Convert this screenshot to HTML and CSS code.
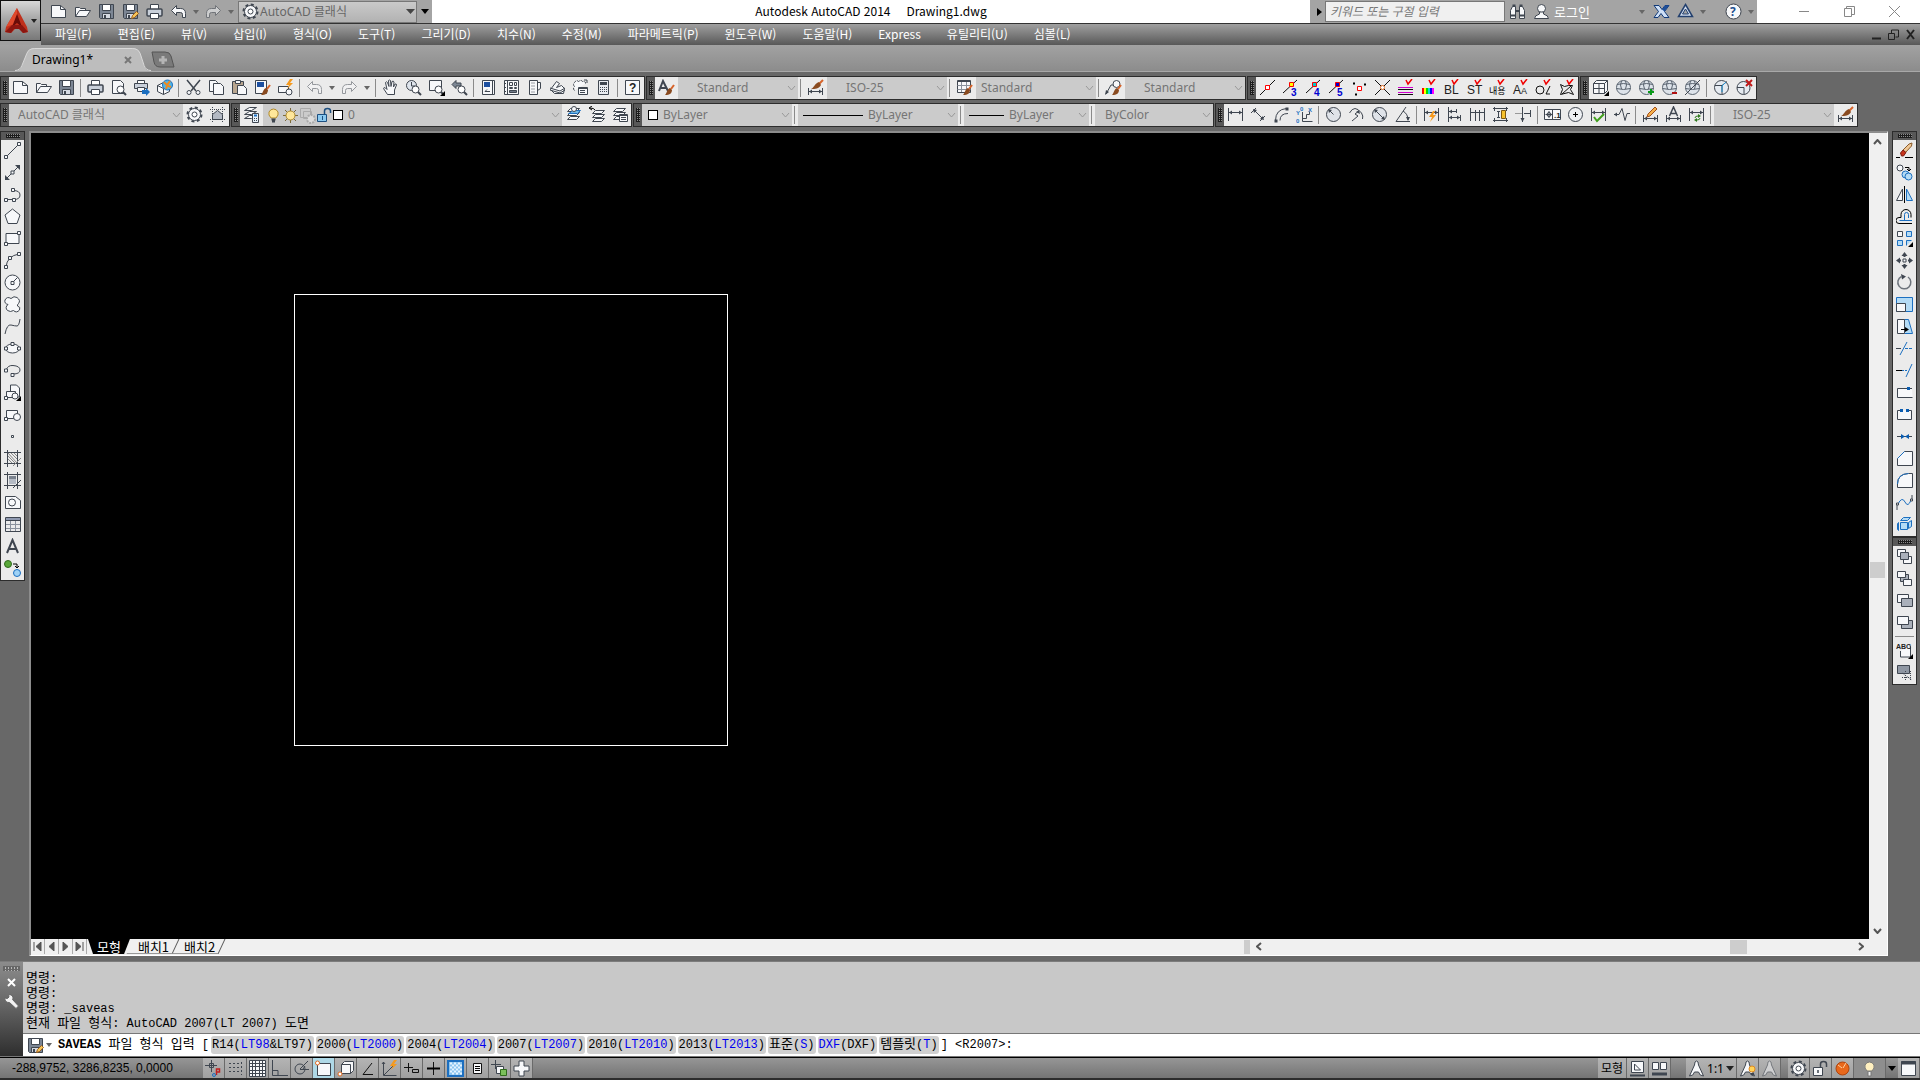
FILE: index.html
```
<!DOCTYPE html>
<html lang="ko">
<head>
    <meta charset="UTF-8">
    <meta name="viewport" content="width=device-width, initial-scale=1.0">
    <title>Autodesk AutoCAD 2014 - Drawing1.dwg</title>
    <link rel="stylesheet" href="styles.css">
</head>
<body>
    <!-- icon sprite -->
    <svg class="sprite" aria-hidden="true">
        <defs>
            <g id="p-mag"><circle cx="10.500" cy="10.500" r="3.500" fill="#fff"/><path d="M13 13l3 3" stroke-width="2"/></g>
            <g id="p-brush"><path d="M16 6l-3 4" stroke="#d8642a" stroke-width="2"/><path d="M12 9l2 2c0 3-2 5-7 5 2-2 2-6 5-7z" fill="#8a4b20" stroke="none"/></g>
            <g id="p-pencil"><path d="M9.500 15.500l1-3 4-4 2 2-4 4z" fill="#f6c65a" stroke="#a0601c"/></g>
            <g id="p-check"><path d="M9 1l2 4 4-5" stroke="#f00000" stroke-width="1.500"/></g>
            <g id="p-corner"><path d="M17 12v5h-5z" fill="#000" stroke="none"/></g>
            <g id="p-dim"><path d="M1.500 2v13M15.500 2v13M2 6.500h13"/><path d="M2 6.500l3-2v4zM15 6.500l-3-2v4z" fill="#3f4650" stroke="none"/></g>
            <g id="p-dimlow"><path d="M1.500 9v7M15.500 9v7M2 12.500h13"/><path d="M2 12.500l3-2v4zM15 12.500l-3-2v4z" fill="#3f4650" stroke="none"/></g>
            <g id="p-sphere"><circle cx="8.500" cy="8.500" r="7" fill="#dde3ea" stroke="#5a6470"/><path d="M2 5.500q6.500-2 13 0M1.500 9.500q7 2 14 0M6.500 2q-2 4 0 8M10.500 2q2 4 0 8" stroke="#5a6470"/></g>
            <g id="p-layers"><path d="M5.500 2.500h9l-3 3h-9zM5.500 6.500h9l-3 3h-9zM5.500 10.500h9l-3 3h-9z" class="lt"/></g>
        </defs>
        <symbol id="i-new" viewBox="0 0 17 17"><path class="lt" d="M1.500 2.500h9l5 4v8h-14z"/><path d="M10.500 2.500v4h5"/></symbol>
        <symbol id="i-open" viewBox="0 0 17 17"><path class="lt" d="M1.500 13.500v-9h4l1 1h5v2h5l-4 6z"/><path d="M1.500 13.500l4-6h7" /></symbol>
        <symbol id="i-save" viewBox="0 0 17 17"><path d="M1.500 1.500h14v14h-13l-1-1z" fill="#7c8694"/><path d="M4.500 1.500h8v6h-8z" fill="#fff"/><path d="M4.500 10.500h8v5h-8z" fill="#d5dae2"/><path d="M7 12v3" stroke-width="2"/></symbol>
        <symbol id="i-saveas" viewBox="0 0 17 17"><use href="#i-save" width="17" height="17"/><use href="#p-pencil"/></symbol>
        <symbol id="i-print" viewBox="0 0 17 17"><path d="M4.500 6.500v-5h8v5" fill="#fff"/><rect x="1" y="6" width="15" height="7" rx="1" fill="#c9d0da" stroke-width="1.500"/><path d="M4.500 10.500h8v5h-8z" fill="#fff"/></symbol>
        <symbol id="i-preview" viewBox="0 0 17 17"><path class="lt" d="M2.500 14.500v-13h8l3 3v10z"/><use href="#p-mag"/></symbol>
        <symbol id="i-publish" viewBox="0 0 17 17"><path d="M4.500 4.500v-3h7v3" fill="#fff"/><path d="M1.500 4.500h13v5h-13z" fill="#c9d0da"/><path class="lt" d="M4.500 8.500h7v4h-7z"/><path d="M9 11h4v-2l4 4-4 4v-2h-4z" fill="#1c6fc0" stroke="none"/></symbol>
        <symbol id="i-globe" viewBox="0 0 17 17"><path class="lt" d="M1.500 6.500l6-3 6 3v6l-6 3-6-3z"/><path d="M1.500 6.500l6 3v6" /><circle cx="11.500" cy="6" r="5" fill="#4fb6e8" stroke="#1c6fc0"/><path d="M8 3q3 4 7 5M10 10q1-5 4-8" stroke="#f08a20" stroke-width="2"/></symbol>
        <symbol id="i-cut" viewBox="0 0 17 17"><path d="M2 1l9 11M15 1l-9 11" stroke-width="1.500"/><circle cx="4" cy="13.500" r="2" class="lt"/><circle cx="13" cy="13.500" r="2" class="lt"/></symbol>
        <symbol id="i-copy" viewBox="0 0 17 17"><path class="lt" d="M1.500 12.500v-11h6l2 2v9z"/><path class="lt" d="M5.500 15.500v-11h7l3 3v8z"/></symbol>
        <symbol id="i-paste" viewBox="0 0 17 17"><path d="M1.500 2.500h11v12h-11z" fill="#b9a68f"/><path d="M4.500 1.500h5v3h-5z" class="lt"/><path class="lt" d="M6.500 15.500v-9h6l3 3v6z"/></symbol>
        <symbol id="i-match" viewBox="0 0 17 17"><path class="lt" d="M1.500 1.500h11v13h-11z"/><path d="M3 3h7v5h-7z" fill="#1c4fa0" stroke="none"/><use href="#p-brush"/></symbol>
        <symbol id="i-block" viewBox="0 0 17 17"><path class="lt" d="M1.500 7.500h10v6h-10z"/><circle cx="12" cy="13" r="3" class="lt"/><path d="M13 0l-4 6h3l-2 4 6-6h-3l3-4z" fill="#f59a1f" stroke="none"/></symbol>
        <symbol id="i-undo" viewBox="0 0 17 17"><path class="lt" d="M1.500 7.500l5-5v3h4q5 0 5 5v4h-3v-3q0-2-2-2h-4v3z"/></symbol>
        <symbol id="i-redo" viewBox="0 0 17 17"><path class="lt" d="M15.500 7.500l-5-5v3h-4q-5 0-5 5v4h3v-3q0-2 2-2h4v3z"/></symbol>
        <symbol id="i-pan" viewBox="0 0 17 17"><path class="lt" d="M5.500 15.500l-4-6q0-1.500 2-.5l1.500 1.500-1.500-7q1-1.500 2 0l1.500 4-.5-6q1-1 2 0l.5 6 1-5q1.500-1 2 .5l-.5 5 1.500-3q1.500-.5 1.500 1l-2 5v4.500z"/></symbol>
        <symbol id="i-zoomrt" viewBox="0 0 17 17"><circle cx="6.500" cy="6.500" r="5" fill="#dfe5ed"/><path d="M6.500 3v4h4"/><use href="#p-mag"/></symbol>
        <symbol id="i-zoomwin" viewBox="0 0 17 17"><path class="lt" d="M1.500 1.500h12v10h-12z"/><use href="#p-mag"/><use href="#p-corner"/></symbol>
        <symbol id="i-zoomprev" viewBox="0 0 17 17"><path d="M1 5.500l4-4v2.500h5v3h-5v2.500z" fill="#7d8794"/><use href="#p-mag"/></symbol>
        <symbol id="i-props" viewBox="0 0 17 17"><path class="lt" d="M2.500 1.500h12v14h-12z"/><path d="M4 3h6v5h-6z" fill="#1c4fa0" stroke="none"/><path d="M12.500 2v13M5 12.500h5M5 12.500l2-2"/></symbol>
        <symbol id="i-dcenter" viewBox="0 0 17 17"><path class="lt" d="M1.500 1.500h14v14h-14z"/><path d="M4.500 1.500v14M2 4.500h1M2 8.500h1M2 12.500h1M6.500 3.500h3v3h-3zM11.500 3.500h2v3h-2zM6.500 8.500h3v1h-3zM11.500 8.500h2v1h-2z"/><path d="M6.500 11.500h7v2h-7z" fill="#707a88"/></symbol>
        <symbol id="i-palette" viewBox="0 0 17 17"><path class="lt" d="M3.500 1.500h8v14h-8zM11.500 3.500h3v6l-3 2"/><path d="M5.500 4h4M5.500 7h4M5.500 10h4M5.500 13h4" stroke-dasharray="1 1"/></symbol>
        <symbol id="i-sheet" viewBox="0 0 17 17"><path class="lt" d="M1.500 10.500l6-8 3 2-3 4 5-2 3 3-1 5h-9z"/><path d="M1 11l10 3 5-3M1 9l10 3 5-3"/></symbol>
        <symbol id="i-markup" viewBox="0 0 17 17"><path class="lt" d="M2.500 11.500q-2-2 0-4-2-2 0-4 2-3 4-1 3-2 4 0 3-1 3 2" stroke-dasharray="3 1"/><path d="M12 1h3v3" /><path class="lt" d="M6.500 8.500h9v7h-9z"/><path d="M6 9.500h9M8 11.500h5M8 13.500h5"/></symbol>
        <symbol id="i-calc" viewBox="0 0 17 17"><path d="M3.500 1.500h10v14h-10z" fill="#e8ebf0"/><path d="M5 3h7v3h-7z" class="dk"/><path d="M5 8.500h7M5 10.500h7M5 12.500h7" stroke-dasharray="1 1"/></symbol>
        <symbol id="i-help" viewBox="0 0 17 17"><path class="lt" d="M1.500 1.500h14v14h-14z"/><text x="5" y="13" font-size="12" font-weight="700" class="ink">?</text></symbol>
        <symbol id="i-textstyle" viewBox="0 0 17 17"><path d="M1 12l4-10 5 10M3 9h5" stroke-width="2"/><use href="#p-brush"/></symbol>
        <symbol id="i-dimstyle" viewBox="0 0 17 17"><use href="#p-dimlow"/><path d="M16 1l-4 4" stroke="#d8642a" stroke-width="2"/><path d="M12 3l2 3c-2 4-6 4-10 4 3-1 3-5 8-7z" fill="#8a4b20" stroke="none"/></symbol>
        <symbol id="i-tablestyle" viewBox="0 0 17 17"><path class="lt" d="M1.500 1.500h13v12h-13z"/><path d="M1.500 2.500h13"/><path d="M1.500 6.500h13M1.500 10.500h13M5.500 3v10M10.500 3v10" stroke="#8a919c"/><use href="#p-brush"/></symbol>
        <symbol id="i-leaderstyle" viewBox="0 0 17 17"><path d="M1 15l5-9h3"/><path d="M0 16l1-5 3 2z" class="dk"/><circle cx="11.500" cy="5" r="3.500" class="lt"/><use href="#p-brush"/></symbol>
        <symbol id="i-gear" viewBox="0 0 17 17"><circle cx="8.500" cy="8.500" r="7" stroke-width="2" stroke-dasharray="3 2.500"/><circle cx="8.500" cy="8.500" r="6" class="lt"/><circle cx="8.500" cy="8.500" r="2.500" fill="#fff"/></symbol>
        <symbol id="i-wsbox" viewBox="0 0 17 17"><path d="M1 3.500h15M1 13.500h15M3.500 1v15M13.500 1v15" stroke-dasharray="1 1"/><path d="M3.500 13.500v-5l5-4 5 4v5z" fill="#b4bac4"/></symbol>
        <symbol id="i-layerprops" viewBox="0 0 17 17"><path class="lt" d="M6.500 1.500h7l-5 3h-7zM6.500 5.500h7l-5 3h-7zM6.500 9.500h7l-5 3h-7z"/><path d="M9.500 7.500h6v9h-6z" fill="#e8f2fb"/><path d="M11 9.500h3" stroke="#1c6fc0" stroke-width="2"/><path d="M11 12.500h4M11 14.500h4" stroke-dasharray="1 1"/></symbol>
        <symbol id="i-bulb" viewBox="0 0 17 17"><path d="M6 11q-3-3-2-6 1.500-3 4.500-3t4.500 3q1 3-2 6z" fill="#ffe79a" stroke="#b08a2e"/><path d="M6.500 12.500h4M7 14.500h3" stroke-width="2"/></symbol>
        <symbol id="i-sun" viewBox="0 0 17 17"><path d="M8.500 1v15M1 8.500h15M3 3l11 11M14 3l-11 11" stroke="#7a6a3a"/><circle cx="8.500" cy="8.500" r="4.500" fill="#ffe79a" stroke="#b08a2e"/></symbol>
        <symbol id="i-vpfreeze" viewBox="0 0 17 17"><g stroke="#aaa"><path d="M1.500 1.500h10v9h-10zM4.500 4.500h8v7h-8z"/><circle cx="12" cy="12" r="4" fill="#ddd" stroke-width="2" stroke-dasharray="2 1"/></g></symbol>
        <symbol id="i-unlock" viewBox="0 0 17 17"><path d="M1.500 7.500h9v7h-9z" fill="#8ccaf0" stroke="#1d4f80"/><path d="M8.500 7v-3q0-2.500 3-2.500t3 2.500v2" stroke="#1d4f80" stroke-width="1.500"/><path d="M6.500 9v4" stroke="#1d4f80"/></symbol>
        <symbol id="i-layercur" viewBox="0 0 17 17"><use href="#p-layers"/><path d="M5.500 6.500l2-2h8l-3 3h-9z" fill="#6fb8e6" stroke="#1c6fc0"/><circle cx="9" cy="3" r="2.500" class="lt"/></symbol>
        <symbol id="i-layerprev" viewBox="0 0 17 17"><g transform="translate(2 2)"><use href="#p-layers"/></g><path d="M7 4q-1-2-5-2M4 0l-3 2 3 2" stroke="#000"/></symbol>
        <symbol id="i-layerstate" viewBox="0 0 17 17"><use href="#p-layers"/><path class="lt" d="M8.500 8.500h8v7h-8z"/><path d="M8 9.500h8M10 11.500h5M10 13.500h5"/></symbol>

        <symbol id="i-osline" viewBox="0 0 17 17"><path d="M1 16l15-15" class="bk"/><path d="M6.500 6.500h4v4h-4z" fill="#fff" stroke="#f00"/></symbol>
        <symbol id="i-os3" viewBox="0 0 17 17"><path d="M1 14l14-13" class="bk"/><path d="M7.500 3.500h4v4h-4z" fill="#ff0" stroke="#f00"/><text x="9" y="17" class="num">3</text></symbol>
        <symbol id="i-os4" viewBox="0 0 17 17"><path d="M1 14l14-13" class="bk"/><path d="M7.500 3.500h4v4h-4z" fill="#0cc" stroke="#f00"/><text x="9" y="17" class="num">4</text></symbol>
        <symbol id="i-os5" viewBox="0 0 17 17"><path d="M1 14l14-13" class="bk"/><path d="M7.500 3.500h4v4h-4z" fill="#00c" stroke="#f00"/><text x="9" y="17" class="num">5</text></symbol>
        <symbol id="i-osnode" viewBox="0 0 17 17"><path d="M6.500 7.500h4v4h-4z" fill="#fff" stroke="#f00"/><path d="M2 4.500h2M13 5.500h2M4 15.500h2" stroke="#000" stroke-width="2"/></symbol>
        <symbol id="i-osint" viewBox="0 0 17 17"><path d="M1 1l15 15M16 1l-15 15" class="bk"/><circle cx="8.500" cy="8.500" r="2" fill="#fff" stroke="#e06a20"/></symbol>
        <symbol id="i-hlines" viewBox="0 0 17 17"><path d="M1 8.500h15M1 13.500h15" stroke="#d000d0"/><path d="M1 10.500h15M1 15.500h15" class="bk"/><use href="#p-check"/></symbol>
        <symbol id="i-colors" viewBox="0 0 17 17"><g stroke-width="2"><path d="M3 9v6" stroke="#f00"/><path d="M5 9v6" stroke="#ff0"/><path d="M7 9v6" stroke="#0d0"/><path d="M9 9v6" stroke="#0dd"/><path d="M11 9v6" stroke="#00f"/><path d="M13 9v6" stroke="#f0f"/></g><use href="#p-check"/></symbol>
        <symbol id="i-bl" viewBox="0 0 17 17"><text x="1" y="15" class="lab">BL</text><use href="#p-check"/></symbol>
        <symbol id="i-st" viewBox="0 0 17 17"><text x="1" y="15" class="lab">ST</text><use href="#p-check"/></symbol>
        <symbol id="i-attr" viewBox="0 0 17 17"><text x="0" y="15" class="kr">내용</text><use href="#p-check"/></symbol>
        <symbol id="i-aa" viewBox="0 0 17 17"><text x="1" y="15" class="lab">A</text><text x="9" y="15" class="ink" font-size="9">A</text><use href="#p-check"/></symbol>
        <symbol id="i-oz" viewBox="0 0 17 17"><circle cx="5" cy="11" r="4" class="bk"/><path d="M15 7l-4 8h4" class="bk"/><use href="#p-check"/></symbol>
        <symbol id="i-region" viewBox="0 0 17 17"><path d="M2.500 5.500l4 2 4-1 4 0-2 4 3 5-5-2-8 2 2-5z" class="bk" /><path d="M4 15l9-8" class="bk"/><use href="#p-check"/></symbol>

        <symbol id="i-cube" viewBox="0 0 17 17"><path class="lt" d="M1.500 4.500l3-3h11v10l-3 3h-11z"/><path d="M1.500 4.500h11v10M12.500 4.500l3-3M7 4.500v10M1.500 9.500h11"/><use href="#p-corner"/></symbol>
        <symbol id="i-sphere" viewBox="0 0 17 17"><use href="#p-sphere"/></symbol>
        <symbol id="i-sphereadd" viewBox="0 0 17 17"><use href="#p-sphere"/><path d="M13 10v6M10 13h6" stroke="#0a9a1a" stroke-width="2"/></symbol>
        <symbol id="i-spheredel" viewBox="0 0 17 17"><use href="#p-sphere"/><path d="M11 14h5" stroke="#b01010" stroke-width="2"/></symbol>
        <symbol id="i-sphereno" viewBox="0 0 17 17"><use href="#p-sphere"/><path d="M1 16l15-15"/></symbol>
        <symbol id="i-vsedit" viewBox="0 0 17 17"><circle cx="8.500" cy="8.500" r="7" fill="#e6ebf1"/><path d="M2 6.500h7v9M9 6.500l5-4" /><path d="M9 7l4-4M9 7v6" stroke="#1c8fd0"/></symbol>
        <symbol id="i-vsdel" viewBox="0 0 17 17"><circle cx="7.500" cy="9" r="6.500" fill="#e6ebf1"/><path d="M1 8.500h7v7"/><path d="M10 1l6 6M16 1l-6 6" stroke="#c01818" stroke-width="2"/></symbol>

        <symbol id="i-dlin" viewBox="0 0 17 17"><use href="#p-dim"/></symbol>
        <symbol id="i-dali" viewBox="0 0 17 17"><path d="M1 7l5-5M10 15l5-5M4 4l9 9"/><path d="M3 3l4 1-3 3zM14 14l-4-1 3-3z" class="dk"/></symbol>
        <symbol id="i-darc" viewBox="0 0 17 17"><path d="M2.500 14.500q0-11 11-12M7 14.500q0-7 8-7"/><path d="M1.500 13.500h3v3h-3zM12.500 1.500h3v3h-3z" class="dk"/></symbol>
        <symbol id="i-dord" viewBox="0 0 17 17"><path d="M6.500 6v9.500h10M6.500 12.500h4v-4h3v-3"/><text x="0" y="9" class="tiny">Y</text><text x="0" y="17" class="tiny">0</text><text x="4" y="5" class="tiny">0</text><text x="12" y="6" class="tiny">X</text></symbol>
        <symbol id="i-drad" viewBox="0 0 17 17"><circle cx="8.500" cy="8.500" r="7" fill="#dfe3e9"/><path d="M8.500 8.500l-4-4"/><path d="M3 3l4 1-3 3z" class="dk"/></symbol>
        <symbol id="i-djog" viewBox="0 0 17 17"><path d="M1.500 7q5-9 12 0 2 3 1 6M4 15l6-5-3-2 4-3"/><path d="M11 4l1 4-4-2z" class="dk"/></symbol>
        <symbol id="i-ddia" viewBox="0 0 17 17"><circle cx="8.500" cy="8.500" r="7" fill="#dfe3e9"/><path d="M4 4l9 9"/><path d="M3 3l4 1-3 3zM14 14l-4-1 3-3z" class="dk"/></symbol>
        <symbol id="i-dang" viewBox="0 0 17 17"><path d="M12 1l-10 14.500h14M9 5q5 3 5 9"/><path d="M14 15l-2-4h4z" class="dk"/></symbol>
        <symbol id="i-dquick" viewBox="0 0 17 17"><use href="#p-dim"/><path d="M10 5l-4 6h3l-2 5 6-7h-3l2-4z" fill="#f59a1f" stroke="none"/></symbol>
        <symbol id="i-dbase" viewBox="0 0 17 17"><path d="M2.500 1v15M10.500 3v4M14.500 9v6M3 5.500h7M3 11.500h11"/><path d="M3 11.500l3-2v4zM14 11.500l-3-2v4zM3 5.500l3-2v4z" class="dk"/></symbol>
        <symbol id="i-dcont" viewBox="0 0 17 17"><path d="M1.500 2v13M6.500 4v11M10.500 4v11M15.500 2v13M1 6.500h15"/></symbol>
        <symbol id="i-dspace" viewBox="0 0 17 17"><path d="M1 2.500h15M1 14.500h15M2.500 1v4M14.500 1v4M2.500 12v4M14.500 12v4M6.500 5v7M5 5.500h3M5 11.500h3"/><path d="M9.500 4.500h4v8h-4z" fill="#f6c12c" stroke="#805a10"/></symbol>
        <symbol id="i-dbreak" viewBox="0 0 17 17"><path d="M7.500 1v15M9 7.500h7M15.500 4v7"/><path d="M0 7.500h7" stroke="#999"/><path d="M7.500 16l-2-4h4z" class="dk"/></symbol>
        <symbol id="i-tol" viewBox="0 0 17 17"><path class="lt" d="M.5 3.500h16v10h-16z"/><path d="M8.500 3v11"/><circle cx="5" cy="8.500" r="2"/><path d="M5 5v7M1.500 8.500h7"/><text x="10" y="12" class="ink" font-size="8" font-weight="700">.1</text></symbol>
        <symbol id="i-center" viewBox="0 0 17 17"><circle cx="8.500" cy="8.500" r="7" fill="#eef0f3"/><path d="M8.500 6v5M6 8.500h5" stroke="#000"/></symbol>
        <symbol id="i-inspect" viewBox="0 0 17 17"><use href="#p-dim"/><path d="M4 11l3 4 7-7" stroke="#3fa01c" stroke-width="2"/></symbol>
        <symbol id="i-jogline" viewBox="0 0 17 17"><path d="M1 8.500h5l3-6 3 12 2-7h3"/><path d="M1 8.500l3-2v4z" class="dk"/></symbol>
        <symbol id="i-dedit" viewBox="0 0 17 17"><use href="#p-dimlow"/><path d="M5 11l1-3 7-7 2 2-7 7z" fill="#f6b04a" stroke="#a0501c"/></symbol>
        <symbol id="i-dtedit" viewBox="0 0 17 17"><use href="#p-dimlow"/><path d="M4.500 10l4-9 4 9M6 7.500h5" stroke-width="1.500"/></symbol>
        <symbol id="i-dupd" viewBox="0 0 17 17"><use href="#p-dim"/><path d="M7 12q0-2 3-2M12 12q0 2-3 2" stroke="#2f7a1c"/><path d="M10 8l3 2-3 2zM9 12l-3 2 3 2z" fill="#2f7a1c" stroke="none"/></symbol>

        <symbol id="i-line" viewBox="0 0 17 17"><path d="M2 15l13-13"/><path class="lt" d="M.5 13.500h3v3h-3zM13.500.5h3v3h-3z"/></symbol>
        <symbol id="i-xline" viewBox="0 0 17 17"><path d="M1 16l15-15"/><path d="M1 16v-5l5 5zM16 1v5l-5-5z" class="dk"/><path class="lt" d="M7 7h3v3h-3z"/></symbol>
        <symbol id="i-pline" viewBox="0 0 17 17"><path d="M2 13.500h8q6 0 6-4.500t-7-4.500"/><path class="lt" d="M.5 12.500h3v3h-3zM8.500 12.500h3v3h-3zM7.500 2.500h3v3h-3z"/></symbol>
        <symbol id="i-polygon" viewBox="0 0 17 17"><path class="lt" d="M8.500 1l7.500 6-3 8.500h-9l-3-8.500z"/></symbol>
        <symbol id="i-rect" viewBox="0 0 17 17"><path class="lt" d="M2 3.500h13v10h-13z"/><path class="lt" d="M.5 12.500h3v3h-3zM13.500 1.500h3v3h-3z"/></symbol>
        <symbol id="i-arc" viewBox="0 0 17 17"><path d="M2 15q1-11 13-13"/><path class="lt" d="M.5 13.500h3v3h-3zM4.500 4.500h3v3h-3zM13.500.5h3v3h-3z"/></symbol>
        <symbol id="i-circle" viewBox="0 0 17 17"><circle cx="8.500" cy="8.500" r="7.500" class="lt"/><path d="M8.500 8.500l5-5"/><path class="lt" d="M7 7.500h3v3h-3z"/></symbol>
        <symbol id="i-cloud" viewBox="0 0 17 17"><path class="lt" d="M4 8.500q-4-1-3-4.500 2-4 6-1.500 3-3 6-1 4 3 1.500 6-1.500 1.500-1 2.500 3.500 1 2 4-3 3.500-6 .5-3 2-6 0-3-3 .5-6z"/></symbol>
        <symbol id="i-spline" viewBox="0 0 17 17"><path d="M1 16q2-10 6-9t6 1 3-7"/></symbol>
        <symbol id="i-ellipse" viewBox="0 0 17 17"><ellipse cx="8.500" cy="8.500" rx="7" ry="4.500" class="lt"/><path class="lt" d="M.5 7h3v3h-3zM13.500 7h3v3h-3zM7 2.500h3v3h-3z"/></symbol>
        <symbol id="i-earc" viewBox="0 0 17 17"><path d="M2 8q2-5 7-4.500 7 .5 7 4.500t-7 4"/><path class="lt" d="M.5 7h3v3h-3zM7 11.500h3v3h-3z"/></symbol>
        <symbol id="i-insert" viewBox="0 0 17 17"><path class="lt" d="M6.500 8v-7h6l3 3v9h-5"/><path class="lt" d="M2.500 7.500h9v6h-9z"/><circle cx="11" cy="12" r="3" class="lt"/><path class="lt" d="M.5 12.500h3v3h-3z"/><use href="#p-corner"/></symbol>
        <symbol id="i-mkblock" viewBox="0 0 17 17"><path class="lt" d="M2.500 4.500h11v8h-11z"/><circle cx="13" cy="11" r="3.500" class="lt"/><path class="lt" d="M.5 11.500h3v3h-3z"/></symbol>
        <symbol id="i-point" viewBox="0 0 17 17"><path class="lt" d="M7.500 7.500h2v2h-2z"/></symbol>
        <symbol id="i-hatch" viewBox="0 0 17 17"><path d="M3.500 0v17M13.500 0v17M0 2.500h17M0 13.500h17"/><path d="M4 6l7 7M4 3l9 10M7 3l6 6M10 3l3 3M4 9l4 4M17 8l-8 8" stroke="#888"/></symbol>
        <symbol id="i-gradient" viewBox="0 0 17 17"><path d="M3.500 0v17M13.500 0v17M0 2.500h17M0 13.500h17"/><path d="M5 4h7v3h-7z" fill="#7a828e" stroke="none"/><path d="M5 7h7v5h-7z" fill="#b4bac4" stroke="none"/><path d="M17 8l-8 8"/></symbol>
        <symbol id="i-regn" viewBox="0 0 17 17"><path class="lt" d="M1.500 2.500h10l5 4v8h-15z"/><circle cx="8" cy="8.500" r="3.500" class="lt"/></symbol>
        <symbol id="i-table" viewBox="0 0 17 17"><path d="M1.500 8.500h15M1.500 12.500h15M6.500 4v12M11.500 4v12" stroke="#8a919c"/><path d="M1.500 1.500h15v14h-15z"/><path d="M2 3h14" stroke="#8f99b0" stroke-width="2"/><path d="M2 4.500h14"/></symbol>
        <symbol id="i-mtext" viewBox="0 0 17 17"><path d="M3 15l5.500-13 5.500 13M5 11h7" stroke-width="2"/></symbol>
        <symbol id="i-addsel" viewBox="0 0 17 17"><circle cx="4" cy="4" r="3.500" fill="#5aa83a" stroke="#2f6a1c"/><circle cx="13" cy="13" r="3.500" fill="#9fd2f6" stroke="#1c6fc0"/><path d="M9 4h4v3M11 6l2 2 2-2" stroke="#000"/></symbol>

        <symbol id="i-erase" viewBox="0 0 17 17"><path d="M0 15.500h4M9 15.500h8" stroke="#000"/><path d="M7 8l6-6 3-1-.5 3-6 6.500z" fill="#f0c896" stroke="#8a5a2a"/><path d="M4.500 11l2.500-3 3 2.500-2.500 3.500h-2z" fill="#c8341c" stroke="#7a1c10"/></symbol>
        <symbol id="i-ccopy" viewBox="0 0 17 17"><circle cx="4" cy="4" r="3" class="lt"/><path d="M9 3.500h4v3M11 5l2 2 2-2" stroke="#000"/><circle cx="9.500" cy="10.500" r="3.500" class="bf"/><circle cx="12.500" cy="12.500" r="3.500" class="bf"/></symbol>
        <symbol id="i-mirror" viewBox="0 0 17 17"><path class="lt" d="M6.500 3v11.500h-6z"/><path d="M8.500 0v17" stroke="#000"/><path class="bf" d="M10.500 3v11.500h6z"/></symbol>
        <symbol id="i-offset" viewBox="0 0 17 17"><path d="M16 15.500h-13a3 3 0 0 1 0-6h2v-3a5 5 0 0 1 10 0v3" stroke="#000"/><path d="M16 12.500h-12.500M8.500 12v-5.500a2 2 0 0 1 4 0v3.500" class="bs"/></symbol>
        <symbol id="i-array" viewBox="0 0 17 17"><path class="lt" d="M1.500 1.500h5v5h-5z"/><path class="bf" d="M10.500 1.500h5v5h-5zM1.500 10.500h5v5h-5zM10.500 15.500v-5h5"/><use href="#p-corner"/></symbol>
        <symbol id="i-move" viewBox="0 0 17 17"><path d="M8.500 0l3 4h-6zM8.500 17l3-4h-6zM0 8.500l4-3v6zM17 8.500l-4-3v6z" class="dk"/><path d="M8.500 3v2M8.500 12v2M3 8.500h2M12 8.500h2" stroke-width="2"/><path class="lt" d="M7 7h3v3h-3z"/></symbol>
        <symbol id="i-rotate" viewBox="0 0 17 17"><path d="M12 3a6.500 6.500 0 1 1-6.500-.5" stroke="#6e747c" stroke-width="1.500"/><path d="M5 0l5 2.500-4 3z" class="dk"/></symbol>
        <symbol id="i-scale" viewBox="0 0 17 17"><path class="bf" d="M.5 1.500h16v14h-16z"/><path class="lt" d="M.5 7.500h9v8h-9z"/></symbol>
        <symbol id="i-stretch" viewBox="0 0 17 17"><path class="bf" d="M8.500 1.500h4l4 14h-8z"/><path class="lt" d="M1.500 1.500h7v14h-7z"/><path d="M5 11.500h6" stroke="#000"/><path d="M9 9l4 2.500-4 2.500z" fill="#000" stroke="none"/></symbol>
        <symbol id="i-trim" viewBox="0 0 17 17"><path d="M0 8.500h5"/><path class="bs" d="M4 15l7-13"/><path class="bs" d="M9 8.500h8" stroke-dasharray="3 1"/></symbol>
        <symbol id="i-extend" viewBox="0 0 17 17"><path d="M0 8.500h6" stroke="#000"/><path class="bs" d="M6 8.500h5" stroke-dasharray="2 1"/><path class="bs" d="M10 15l6-13"/></symbol>
        <symbol id="i-breakpt" viewBox="0 0 17 17"><path class="lt" d="M16 4.500h-14.500v9h15"/><path d="M11 3h3v3h-3z" fill="#0a5cb0" stroke="none"/></symbol>
        <symbol id="i-break" viewBox="0 0 17 17"><path class="lt" d="M5 4.500h-3.500v9h14v-9h-3"/><path d="M4 3h3v3h-3zM10 3h3v3h-3z" fill="#0a5cb0" stroke="none"/></symbol>
        <symbol id="i-join" viewBox="0 0 17 17"><path d="M1 8.500h15" /><path d="M5 6l4 2.500-4 2.500zM13 6l-4 2.500 4 2.500z" fill="#0a5cb0" stroke="none"/></symbol>
        <symbol id="i-chamfer" viewBox="0 0 17 17"><path class="lt" d="M1.500 15.500v-7l7-7h8v14z"/><path class="bs" d="M1.500 8.500l7-7"/></symbol>
        <symbol id="i-fillet" viewBox="0 0 17 17"><path class="lt" d="M1.500 15.500v-3.500q0-10 11-10.500h4v14z"/><path class="bs" d="M1.500 12q0-10 11-10.500"/></symbol>
        <symbol id="i-blend" viewBox="0 0 17 17"><path d="M1 16v-6M16 1v5"/><path class="bs" d="M2 10q4-8 7-2t6-2"/><path class="lt" d="M.5 9h2v2h-2zM14.500 5h2v2h-2z"/></symbol>
        <symbol id="i-explode" viewBox="0 0 17 17"><path class="bf" d="M4.500 6.500h7v7h-7zM4.500 4.500l3-3h7l-3 3zM12.500 6.500l3-2v6l-3 2zM2.500 6.500l-1 1v6l1 1z"/></symbol>
        <symbol id="i-front" viewBox="0 0 17 17"><path class="lt" d="M1.500 1.500h8v7h-8zM7.500 8.500h8v7h-8z"/><path d="M4.500 4.500h8v7h-8z" fill="#aab0ba"/></symbol>
        <symbol id="i-back" viewBox="0 0 17 17"><path d="M4.500 4.500h8v7h-8z" fill="#aab0ba"/><path class="lt" d="M1.500 1.500h8v6h-8zM7.500 9.500h8v6h-8z"/></symbol>
        <symbol id="i-above" viewBox="0 0 17 17"><path class="lt" d="M1.500 2.500h11v8h-11z"/><path d="M5.500 6.500h11v8h-11z" fill="#aab0ba"/></symbol>
        <symbol id="i-under" viewBox="0 0 17 17"><path d="M5.500 6.500h11v8h-11z" fill="#aab0ba"/><path class="lt" d="M1.500 2.500h11v8h-11z"/></symbol>
        <symbol id="i-abc" viewBox="0 0 17 17"><path class="lt" d="M4.500 9v6h10v-11h-1"/><text x="0" y="7" class="ink" font-size="7" font-weight="700">ABC</text><use href="#p-corner"/></symbol>
        <symbol id="i-hatchback" viewBox="0 0 17 17"><path d="M1.500 1.500h12v8h-12z" fill="#8f97a3"/><path d="M6 9l10 7M9.500 7v9M14.500 7v9M6 13.500h10" stroke-dasharray="1 1"/></symbol>

        <symbol id="i-infer" viewBox="0 0 17 17"><path d="M6.500 0v12M0 5.500h12M4.500 3.500h4v4h-4z"/><path d="M11.500 15v-6h3v3h-3" stroke="#c02020" stroke-width="1.500"/><circle cx="9" cy="15" r="1.500" stroke="#1c6fc0"/></symbol>
        <symbol id="i-snap" viewBox="0 0 17 17"><path d="M2 3.500h10M2 7.500h10M2 11.500h10M14.500 2v13" stroke-dasharray="2 2"/></symbol>
        <symbol id="i-grid" viewBox="0 0 17 17"><path class="lt" d="M.5.5h16v16h-16z"/><path d="M.5 3.500h16M.5 6.500h16M.5 10.500h16M.5 13.500h16M3.500 0v17M6.500 0v17M10.500 0v17M13.500 0v17"/></symbol>
        <symbol id="i-ortho" viewBox="0 0 17 17"><path d="M1.500 0v15.500h15.500M2 10.500h5v5"/></symbol>
        <symbol id="i-polar" viewBox="0 0 17 17"><circle cx="7" cy="9" r="5"/><path d="M7 9.500h9M7 9l8-8M12 6l-2 3"/></symbol>
        <symbol id="i-osnap" viewBox="0 0 17 17"><path class="lt" d="M2.500 3.500h13v12h-13z"/><circle cx="2.500" cy="3" r="2" fill="#fff" stroke="#e06a20"/></symbol>
        <symbol id="i-3dosnap" viewBox="0 0 17 17"><path d="M4.500 4.500l3-3h9v9l-3 3h-9z" class="lt"/><path d="M4.500 4.500h9v9" /><circle cx="3" cy="14" r="2" fill="#fff" stroke="#e06a20"/></symbol>
        <symbol id="i-otrack" viewBox="0 0 17 17"><path d="M13 3l-9 11.500h10" class="bk"/></symbol>
        <symbol id="i-ducs" viewBox="0 0 17 17"><path d="M2.500 2v13.500h13M3 15l9-9M1 4l1.500-2 1.500 2"/><path d="M13 0l-4 6h3l-2 4 6-6h-3l3-4z" fill="#f59a1f" stroke="none"/></symbol>
        <symbol id="i-dyn" viewBox="0 0 17 17"><path d="M5.500 3v9M1 7.500h9M9.500 9.500h6v3h-6z" class="bk" /></symbol>
        <symbol id="i-lwt" viewBox="0 0 17 17"><path d="M8.500 2v13" class="bk"/><path d="M2 8.500h13" stroke="#000" stroke-width="2"/></symbol>
        <symbol id="i-tpy" viewBox="0 0 17 17"><path d="M1 1h15v15h-15z" fill="#8cc4ee" stroke="#1c6fc0" stroke-width="2"/><path d="M3 3.500h12M3 7.500h12M3 11.500h12" stroke="#e4f3ff" stroke-dasharray="2 2" stroke-width="2"/><path d="M5 5.500h10M5 9.500h10M5 13.500h10" stroke="#e4f3ff" stroke-dasharray="2 2" stroke-width="2"/></symbol>
        <symbol id="i-qp" viewBox="0 0 17 17"><path d="M4.500 3.500h8v10h-8z" class="bk lt"/><path d="M6 6.500h5M6 8.500h5M6 10.500h5" stroke="#000"/></symbol>
        <symbol id="i-sc" viewBox="0 0 17 17"><path d="M4.500 0v9M0 4.500h10"/><path d="M5.500 6.500h7v7h-7z" class="lt"/><path d="M9.500 9.500h6v6h-6z" fill="#7ac05a" stroke="#2f6a1c"/></symbol>
        <symbol id="i-am" viewBox="0 0 17 17"><path class="lt" d="M6 1h5v5h5v5h-5v5h-5v-5h-5v-5h5z"/></symbol>
        <symbol id="i-model" viewBox="0 0 17 17"><path class="lt" d="M2.500 1.500h12v11h-12z"/><path d="M5.500 4v6h6z"/><path d="M1 15.500h15" stroke-width="2"/></symbol>
        <symbol id="i-views" viewBox="0 0 17 17"><path class="lt" d="M1.500 2.500h6v7h-6zM9.500 2.500h6v7h-6z"/><path d="M1 14h15" stroke-width="3"/></symbol>
        <symbol id="i-scaleman" viewBox="0 0 17 17"><path class="lt" d="M8.500 1q2 0 2 4l5 11q-4 0-5-4h-4q-1 4-5 4l5-11q0-4 2-4z"/></symbol>
        <symbol id="i-scalelamp" viewBox="0 0 17 17"><use href="#i-scaleman" width="17" height="17"/><circle cx="13" cy="9" r="3" fill="#ffd35a" stroke="#e08a20"/><path d="M12 14h3" stroke-width="2"/></symbol>
        <symbol id="i-lock" viewBox="0 0 17 17"><path class="lt" d="M1.500 7.500h9v8h-9z"/><path d="M8.500 7v-3q0-2.500 3-2.500t3 2.500v3M6 10v3" stroke-width="1.500"/></symbol>
        <symbol id="i-hw" viewBox="0 0 17 17"><circle cx="8.500" cy="8.500" r="6.500" fill="#e8681c" stroke="#b0440c"/><path d="M4 5l4 3M12 3l-3 5" stroke="#ffd0a0"/></symbol>
        <symbol id="i-clean" viewBox="0 0 17 17"><path class="lt" d="M1.500 1.500h14v14h-14z"/><path d="M1 3h15" stroke-width="3"/></symbol>
        <symbol id="i-lampoff" viewBox="0 0 17 17"><path d="M6 11q-3-3-2-6 1.500-3 4.500-3t4.500 3q1 3-2 6z" fill="#fff0c0" stroke="#777"/><path d="M7 12v4h3v-4" fill="#eee" stroke="#777"/></symbol>
        <symbol id="i-wrench" viewBox="0 0 17 17"><path d="M1.500 4l3 .5 1.500-1.500-.5-2.500q3-.5 4.500 2.500 0 2-.5 2.500l6 6.500-2.500 2.500-6.500-6q-4 .5-5-4.500z" fill="#f2f2f2" stroke="#666"/></symbol>
        <symbol id="i-binoc" viewBox="0 0 17 17"><path class="lt" d="M3.500 3.500h3v12h-5v-8zM13.500 3.500h-3v12h5v-8z"/><path d="M3.500 2.500h3M10.500 2.500h3M7 8h3M2 12.500h5M10 12.500h5" stroke-width="2"/></symbol>
        <symbol id="i-user" viewBox="0 0 17 17"><circle cx="8.500" cy="5.500" r="4" class="lt"/><path class="lt" d="M1.500 15.500q0-3 5-4.500v-2h4v2q5 1.500 5 4.500z"/></symbol>
        <symbol id="i-exch" viewBox="0 0 17 17"><path d="M1 2.500h5l3 4 3-4h4l-4.500 6 4.500 6h-5l-3-4-3 4h-4l4.500-6z" fill="#cfe0f6" stroke="#123a78"/><path d="M9 6.500l3-4h4l-4.500 6z" fill="#1f4f9a" stroke="none"/></symbol>
        <symbol id="i-a360" viewBox="0 0 17 17"><path d="M8.500 1.500l7 12h-14z" fill="#d4dff0" stroke="#23406e" stroke-width="1.500"/><path d="M8.500 6l3 5h-6z" fill="#a4a4a4" stroke="#23406e"/></symbol>
        <symbol id="i-qhelp" viewBox="0 0 17 17"><circle cx="8.500" cy="8.500" r="7.500" class="lt"/><text x="5" y="13" font-size="12" font-weight="700" fill="#1c4f90" stroke="none">?</text></symbol>
    </svg>

    <header class="top">
        <button class="app-button" aria-label="AutoCAD">
            <svg class="logo" viewBox="0 0 24 26"><path d="M12 0L1 19l-1 5 6 1 4-4h5l3 4 5-1-1-5z" fill="#c0301c"/><path d="M12 0L1 19l11-4z" fill="#e0492c"/><path d="M12 6l5 13-5-4-5 4z" fill="#6a0c08"/><path d="M0 24l7-7h10l6 7-5 1-4-4h-5l-3 4z" fill="#8c1610"/></svg>
            <span class="caret"></span>
        </button>
        <div class="title-bar">
            <div class="quick-access">
                <button class="tool" aria-label="새로 만들기"><svg class="icon"><use href="#i-new"/></svg></button>
                <button class="tool" aria-label="열기"><svg class="icon"><use href="#i-open"/></svg></button>
                <button class="tool" aria-label="저장"><svg class="icon"><use href="#i-save"/></svg></button>
                <button class="tool" aria-label="다른 이름으로 저장"><svg class="icon"><use href="#i-saveas"/></svg></button>
                <button class="tool" aria-label="플롯"><svg class="icon"><use href="#i-print"/></svg></button>
                <button class="tool" aria-label="명령 취소"><svg class="icon"><use href="#i-undo"/></svg></button>
                <button class="drop" aria-label="취소 목록"></button>
                <button class="tool dim" aria-label="명령 복구"><svg class="icon"><use href="#i-redo"/></svg></button>
                <button class="drop" aria-label="복구 목록"></button>
                <div class="workspace-pick">
                    <svg class="icon"><use href="#i-gear"/></svg>
                    <select aria-label="작업공간"><option>AutoCAD 클래식</option></select>
                </div>
                <button class="drop dark" aria-label="사용자화"></button>
            </div>
            <h1 class="title">Autodesk AutoCAD 2014<span>Drawing1.dwg</span></h1>
            <div class="info-center">
                <button class="drop right" aria-label="접기"></button>
                <input type="text" placeholder="키워드 또는 구절 입력" aria-label="검색">
                <button class="tool" aria-label="찾기"><svg class="icon"><use href="#i-binoc"/></svg></button>
                <button class="login"><svg class="icon"><use href="#i-user"/></svg>로그인<span class="caret small"></span></button>
                <button class="tool" aria-label="Exchange"><svg class="icon"><use href="#i-exch"/></svg></button>
                <button class="tool" aria-label="Autodesk 360"><svg class="icon"><use href="#i-a360"/></svg></button>
                <button class="drop" aria-label="연결"></button>
                <button class="tool help" aria-label="도움말"><svg class="icon"><use href="#i-qhelp"/></svg></button>
                <button class="drop" aria-label="도움말 목록"></button>
            </div>
            <div class="window-buttons">
                <button aria-label="최소화"><svg viewBox="0 0 11 11"><path d="M0 5.500h10"/></svg></button>
                <button aria-label="복원"><svg viewBox="0 0 11 11"><path d="M.5 2.500h7v8h-7zM2.500 2.500v-2h8v8h-3"/></svg></button>
                <button aria-label="닫기"><svg viewBox="0 0 11 11"><path d="M0 0l11 11M11 0l-11 11"/></svg></button>
            </div>
        </div>
        <nav class="menu">
            <a href="#">파일(F)</a>
            <a href="#">편집(E)</a>
            <a href="#">뷰(V)</a>
            <a href="#">삽입(I)</a>
            <a href="#">형식(O)</a>
            <a href="#">도구(T)</a>
            <a href="#">그리기(D)</a>
            <a href="#">치수(N)</a>
            <a href="#">수정(M)</a>
            <a href="#">파라메트릭(P)</a>
            <a href="#">윈도우(W)</a>
            <a href="#">도움말(H)</a>
            <a href="#">Express</a>
            <a href="#">유틸리티(U)</a>
            <a href="#">심볼(L)</a>
            <div class="mdi">
                <button aria-label="도면 최소화"><svg viewBox="0 0 11 11"><path d="M1 9.500h9" stroke-width="2"/></svg></button>
                <button aria-label="도면 복원"><svg viewBox="0 0 11 11"><path d="M.5 4.500h6v6h-6zM3.500 4v-3h7v7h-3"/></svg></button>
                <button aria-label="도면 닫기"><svg viewBox="0 0 11 11"><path d="M2 1l7 9M9 1l-7 9" stroke-width="2"/></svg></button>
            </div>
        </nav>
    </header>

    <div class="file-tabs">
        <div class="file-tab">
            <svg class="tab-shape" viewBox="0 0 138 23" preserveAspectRatio="none"><path d="M0 23q5 0 7-5l5-13q2-5 8-5h99q6 0 8 5l4 13q2 5 7 5z" fill="#bdbdbd"/><path d="M0 22.500q5 0 7-5l5-12q2-5 8-5h99q6 0 8 5l4 12q2 5 7 5" fill="none" stroke="#d9d9d9"/></svg>
            <span>Drawing1*</span>
            <button class="tab-close" aria-label="탭 닫기"><svg viewBox="0 0 8 8"><path d="M1 1l6 6M7 1l-6 6"/></svg></button>
        </div>
        <button class="tab-new" aria-label="새 도면"><svg viewBox="0 0 24 17"><path d="M1 1h13q5 0 6 4l3 11h-14q-5 0-6-5z" fill="#7a7a7a" stroke="#555"/><path d="M12 5v8M8 9h8" stroke="#b5b5b5" stroke-width="3"/></svg></button>
    </div>

    <div class="toolbars">
        <div class="row">
            <div class="toolbar">
                <span class="grip"></span>
                <button class="tool" aria-label="새로 만들기"><svg class="icon"><use href="#i-new"/></svg></button>
                <button class="tool" aria-label="열기"><svg class="icon"><use href="#i-open"/></svg></button>
                <button class="tool" aria-label="저장"><svg class="icon"><use href="#i-save"/></svg></button>
                <span class="sep"></span>
                <button class="tool" aria-label="플롯"><svg class="icon"><use href="#i-print"/></svg></button>
                <button class="tool" aria-label="미리보기"><svg class="icon"><use href="#i-preview"/></svg></button>
                <button class="tool" aria-label="게시"><svg class="icon"><use href="#i-publish"/></svg></button>
                <button class="tool" aria-label="3DDWF"><svg class="icon"><use href="#i-globe"/></svg></button>
                <span class="sep"></span>
                <button class="tool" aria-label="잘라내기"><svg class="icon"><use href="#i-cut"/></svg></button>
                <button class="tool" aria-label="복사"><svg class="icon"><use href="#i-copy"/></svg></button>
                <button class="tool" aria-label="붙여넣기"><svg class="icon"><use href="#i-paste"/></svg></button>
                <button class="tool" aria-label="특성 일치"><svg class="icon"><use href="#i-match"/></svg></button>
                <button class="tool" aria-label="블록 편집기"><svg class="icon"><use href="#i-block"/></svg></button>
                <span class="sep"></span>
                <button class="tool dim" aria-label="명령 취소"><svg class="icon"><use href="#i-undo"/></svg></button>
                <button class="drop" aria-label="취소 목록"></button>
                <button class="tool dim" aria-label="명령 복구"><svg class="icon"><use href="#i-redo"/></svg></button>
                <button class="drop" aria-label="복구 목록"></button>
                <span class="sep"></span>
                <button class="tool" aria-label="초점이동"><svg class="icon"><use href="#i-pan"/></svg></button>
                <button class="tool" aria-label="실시간 줌"><svg class="icon"><use href="#i-zoomrt"/></svg></button>
                <button class="tool" aria-label="줌 윈도우"><svg class="icon"><use href="#i-zoomwin"/></svg></button>
                <button class="tool" aria-label="줌 이전"><svg class="icon"><use href="#i-zoomprev"/></svg></button>
                <span class="sep"></span>
                <button class="tool" aria-label="특성"><svg class="icon"><use href="#i-props"/></svg></button>
                <button class="tool" aria-label="DesignCenter"><svg class="icon"><use href="#i-dcenter"/></svg></button>
                <button class="tool" aria-label="도구 팔레트"><svg class="icon"><use href="#i-palette"/></svg></button>
                <button class="tool" aria-label="시트 세트"><svg class="icon"><use href="#i-sheet"/></svg></button>
                <button class="tool" aria-label="표식"><svg class="icon"><use href="#i-markup"/></svg></button>
                <button class="tool" aria-label="계산기"><svg class="icon"><use href="#i-calc"/></svg></button>
                <span class="sep"></span>
                <button class="tool" aria-label="도움말"><svg class="icon"><use href="#i-help"/></svg></button>
            </div>
            <div class="toolbar">
                <span class="grip"></span>
                <button class="tool" aria-label="문자 스타일"><svg class="icon"><use href="#i-textstyle"/></svg></button>
                <select class="combo indent" aria-label="문자 스타일 목록"><option>Standard</option></select>
                <span class="sep"></span>
                <button class="tool" aria-label="치수 스타일"><svg class="icon"><use href="#i-dimstyle"/></svg></button>
                <select class="combo indent" aria-label="치수 스타일 목록"><option>ISO-25</option></select>
                <span class="sep"></span>
                <button class="tool" aria-label="테이블 스타일"><svg class="icon"><use href="#i-tablestyle"/></svg></button>
                <select class="combo" aria-label="테이블 스타일 목록"><option>Standard</option></select>
                <span class="sep"></span>
                <button class="tool" aria-label="지시선 스타일"><svg class="icon"><use href="#i-leaderstyle"/></svg></button>
                <select class="combo indent" aria-label="지시선 스타일 목록"><option>Standard</option></select>
            </div>
            <div class="toolbar">
                <span class="grip"></span>
                <button class="tool" aria-label="선"><svg class="icon"><use href="#i-osline"/></svg></button>
                <button class="tool" aria-label="색상 3"><svg class="icon"><use href="#i-os3"/></svg></button>
                <button class="tool" aria-label="색상 4"><svg class="icon"><use href="#i-os4"/></svg></button>
                <button class="tool" aria-label="색상 5"><svg class="icon"><use href="#i-os5"/></svg></button>
                <button class="tool" aria-label="노드"><svg class="icon"><use href="#i-osnode"/></svg></button>
                <button class="tool" aria-label="교차"><svg class="icon"><use href="#i-osint"/></svg></button>
                <button class="tool" aria-label="선 선택"><svg class="icon"><use href="#i-hlines"/></svg></button>
                <button class="tool" aria-label="색상 선택"><svg class="icon"><use href="#i-colors"/></svg></button>
                <button class="tool" aria-label="블록 선택"><svg class="icon"><use href="#i-bl"/></svg></button>
                <button class="tool" aria-label="스타일 선택"><svg class="icon"><use href="#i-st"/></svg></button>
                <button class="tool" aria-label="내용 선택"><svg class="icon"><use href="#i-attr"/></svg></button>
                <button class="tool" aria-label="문자 선택"><svg class="icon"><use href="#i-aa"/></svg></button>
                <button class="tool" aria-label="객체 선택"><svg class="icon"><use href="#i-oz"/></svg></button>
                <button class="tool" aria-label="영역 선택"><svg class="icon"><use href="#i-region"/></svg></button>
            </div>
            <div class="toolbar">
                <span class="grip"></span>
                <button class="tool" aria-label="2D 와이어프레임"><svg class="icon"><use href="#i-cube"/></svg></button>
                <button class="tool" aria-label="면"><svg class="icon"><use href="#i-sphere"/></svg></button>
                <button class="tool" aria-label="면 추가"><svg class="icon"><use href="#i-sphereadd"/></svg></button>
                <button class="tool" aria-label="면 제거"><svg class="icon"><use href="#i-spheredel"/></svg></button>
                <button class="tool" aria-label="면 없음"><svg class="icon"><use href="#i-sphereno"/></svg></button>
                <span class="sep"></span>
                <button class="tool" aria-label="스타일 편집"><svg class="icon"><use href="#i-vsedit"/></svg></button>
                <button class="tool" aria-label="스타일 삭제"><svg class="icon"><use href="#i-vsdel"/></svg></button>
            </div>
        </div>
        <div class="row">
            <div class="toolbar">
                <span class="grip"></span>
                <select class="combo workspace" aria-label="작업공간 목록"><option>AutoCAD 클래식</option></select>
                <button class="tool" aria-label="작업공간 설정"><svg class="icon"><use href="#i-gear"/></svg></button>
                <button class="tool" aria-label="내 작업공간"><svg class="icon"><use href="#i-wsbox"/></svg></button>
            </div>
            <div class="toolbar">
                <span class="grip"></span>
                <button class="tool" aria-label="도면층 특성"><svg class="icon"><use href="#i-layerprops"/></svg></button>
                <div class="combo-box layer">
                    <svg class="icon"><use href="#i-bulb"/></svg>
                    <svg class="icon"><use href="#i-sun"/></svg>
                    <svg class="icon"><use href="#i-vpfreeze"/></svg>
                    <svg class="icon"><use href="#i-unlock"/></svg>
                    <span class="swatch"></span>
                    <select class="combo" aria-label="도면층"><option>0</option></select>
                </div>
                <button class="tool" aria-label="현재로 설정"><svg class="icon"><use href="#i-layercur"/></svg></button>
                <button class="tool" aria-label="이전 도면층"><svg class="icon"><use href="#i-layerprev"/></svg></button>
                <button class="tool" aria-label="도면층 상태"><svg class="icon"><use href="#i-layerstate"/></svg></button>
            </div>
            <div class="toolbar">
                <span class="grip"></span>
                <div class="combo-box color">
                    <span class="swatch"></span>
                    <select class="combo" aria-label="색상"><option>ByLayer</option></select>
                </div>
                <span class="sep"></span>
                <div class="combo-box linetype">
                    <span class="stroke"></span>
                    <select class="combo" aria-label="선종류"><option>ByLayer</option></select>
                </div>
                <span class="sep"></span>
                <div class="combo-box weight">
                    <span class="stroke short"></span>
                    <select class="combo" aria-label="선가중치"><option>ByLayer</option></select>
                </div>
                <span class="sep"></span>
                <select class="combo plot" aria-label="플롯 스타일"><option>ByColor</option></select>
            </div>
            <div class="toolbar">
                <span class="grip"></span>
                <button class="tool" aria-label="선형"><svg class="icon"><use href="#i-dlin"/></svg></button>
                <button class="tool" aria-label="정렬"><svg class="icon"><use href="#i-dali"/></svg></button>
                <button class="tool" aria-label="호 길이"><svg class="icon"><use href="#i-darc"/></svg></button>
                <button class="tool" aria-label="세로좌표"><svg class="icon"><use href="#i-dord"/></svg></button>
                <span class="sep"></span>
                <button class="tool" aria-label="반지름"><svg class="icon"><use href="#i-drad"/></svg></button>
                <button class="tool" aria-label="꺾기"><svg class="icon"><use href="#i-djog"/></svg></button>
                <button class="tool" aria-label="지름"><svg class="icon"><use href="#i-ddia"/></svg></button>
                <button class="tool" aria-label="각도"><svg class="icon"><use href="#i-dang"/></svg></button>
                <span class="sep"></span>
                <button class="tool" aria-label="신속 치수"><svg class="icon"><use href="#i-dquick"/></svg></button>
                <button class="tool" aria-label="기준선"><svg class="icon"><use href="#i-dbase"/></svg></button>
                <button class="tool" aria-label="연속"><svg class="icon"><use href="#i-dcont"/></svg></button>
                <button class="tool" aria-label="치수 간격"><svg class="icon"><use href="#i-dspace"/></svg></button>
                <button class="tool" aria-label="치수 끊기"><svg class="icon"><use href="#i-dbreak"/></svg></button>
                <span class="sep"></span>
                <button class="tool" aria-label="공차"><svg class="icon"><use href="#i-tol"/></svg></button>
                <button class="tool" aria-label="중심 표식"><svg class="icon"><use href="#i-center"/></svg></button>
                <button class="tool" aria-label="검사"><svg class="icon"><use href="#i-inspect"/></svg></button>
                <button class="tool" aria-label="꺾어진 선형"><svg class="icon"><use href="#i-jogline"/></svg></button>
                <span class="sep"></span>
                <button class="tool" aria-label="치수 편집"><svg class="icon"><use href="#i-dedit"/></svg></button>
                <button class="tool" aria-label="치수 문자 편집"><svg class="icon"><use href="#i-dtedit"/></svg></button>
                <button class="tool" aria-label="치수 업데이트"><svg class="icon"><use href="#i-dupd"/></svg></button>
                <span class="sep"></span>
                <select class="combo indent" aria-label="치수 스타일 조정"><option>ISO-25</option></select>
                <button class="tool" aria-label="치수 스타일"><svg class="icon"><use href="#i-dimstyle"/></svg></button>
            </div>
        </div>
    </div>

    <main class="workspace-area">
        <div class="side left">
            <div class="toolbar vertical">
                <span class="grip"></span>
                <button class="tool" aria-label="선"><svg class="icon"><use href="#i-line"/></svg></button>
                <button class="tool" aria-label="구성선"><svg class="icon"><use href="#i-xline"/></svg></button>
                <button class="tool" aria-label="폴리선"><svg class="icon"><use href="#i-pline"/></svg></button>
                <button class="tool" aria-label="폴리곤"><svg class="icon"><use href="#i-polygon"/></svg></button>
                <button class="tool" aria-label="직사각형"><svg class="icon"><use href="#i-rect"/></svg></button>
                <button class="tool" aria-label="호"><svg class="icon"><use href="#i-arc"/></svg></button>
                <button class="tool" aria-label="원"><svg class="icon"><use href="#i-circle"/></svg></button>
                <button class="tool" aria-label="구름형 수정기호"><svg class="icon"><use href="#i-cloud"/></svg></button>
                <button class="tool" aria-label="스플라인"><svg class="icon"><use href="#i-spline"/></svg></button>
                <button class="tool" aria-label="타원"><svg class="icon"><use href="#i-ellipse"/></svg></button>
                <button class="tool" aria-label="타원형 호"><svg class="icon"><use href="#i-earc"/></svg></button>
                <button class="tool" aria-label="블록 삽입"><svg class="icon"><use href="#i-insert"/></svg></button>
                <button class="tool" aria-label="블록 작성"><svg class="icon"><use href="#i-mkblock"/></svg></button>
                <button class="tool" aria-label="점"><svg class="icon"><use href="#i-point"/></svg></button>
                <button class="tool" aria-label="해치"><svg class="icon"><use href="#i-hatch"/></svg></button>
                <button class="tool" aria-label="그라데이션"><svg class="icon"><use href="#i-gradient"/></svg></button>
                <button class="tool" aria-label="영역"><svg class="icon"><use href="#i-regn"/></svg></button>
                <button class="tool" aria-label="테이블"><svg class="icon"><use href="#i-table"/></svg></button>
                <button class="tool" aria-label="여러 줄 문자"><svg class="icon"><use href="#i-mtext"/></svg></button>
                <button class="tool" aria-label="선택 추가"><svg class="icon"><use href="#i-addsel"/></svg></button>
            </div>
        </div>

        <div class="drawing">
            <div class="canvas">
                <div class="entity"></div>
            </div>
            <div class="vscroll">
                <button aria-label="위로"><svg viewBox="0 0 9 6"><path d="M1 5l3.500-4 3.500 4"/></svg></button>
                <span class="thumb"></span>
                <button aria-label="아래로"><svg viewBox="0 0 9 6"><path d="M1 1l3.500 4 3.500-4"/></svg></button>
            </div>
            <div class="layout-bar">
                <button class="nav" aria-label="처음"><svg viewBox="0 0 9 9"><path d="M1 0v9M8 0v9l-5-4.500z"/></svg></button>
                <button class="nav" aria-label="이전"><svg viewBox="0 0 9 9"><path d="M7 0v9l-5-4.500z"/></svg></button>
                <button class="nav" aria-label="다음"><svg viewBox="0 0 9 9"><path d="M2 0v9l5-4.500z"/></svg></button>
                <button class="nav" aria-label="마지막"><svg viewBox="0 0 9 9"><path d="M8 0v9M1 0v9l5-4.500z"/></svg></button>
                <button class="layout active">모형</button>
                <button class="layout">배치1</button>
                <button class="layout">배치2</button>
                <div class="hscroll">
                    <span class="splitter"></span>
                    <button aria-label="왼쪽"><svg viewBox="0 0 6 9"><path d="M5 1l-4 3.500 4 3.500"/></svg></button>
                    <span class="thumb"></span>
                    <button aria-label="오른쪽"><svg viewBox="0 0 6 9"><path d="M1 1l4 3.500-4 3.500"/></svg></button>
                </div>
            </div>
        </div>

        <div class="side right">
            <div class="toolbar vertical">
                <span class="grip"></span>
                <button class="tool" aria-label="지우기"><svg class="icon"><use href="#i-erase"/></svg></button>
                <button class="tool" aria-label="복사"><svg class="icon"><use href="#i-ccopy"/></svg></button>
                <button class="tool" aria-label="대칭"><svg class="icon"><use href="#i-mirror"/></svg></button>
                <button class="tool" aria-label="간격띄우기"><svg class="icon"><use href="#i-offset"/></svg></button>
                <button class="tool" aria-label="배열"><svg class="icon"><use href="#i-array"/></svg></button>
                <button class="tool" aria-label="이동"><svg class="icon"><use href="#i-move"/></svg></button>
                <button class="tool" aria-label="회전"><svg class="icon"><use href="#i-rotate"/></svg></button>
                <button class="tool" aria-label="축척"><svg class="icon"><use href="#i-scale"/></svg></button>
                <button class="tool" aria-label="신축"><svg class="icon"><use href="#i-stretch"/></svg></button>
                <button class="tool" aria-label="자르기"><svg class="icon"><use href="#i-trim"/></svg></button>
                <button class="tool" aria-label="연장"><svg class="icon"><use href="#i-extend"/></svg></button>
                <button class="tool" aria-label="점에서 끊기"><svg class="icon"><use href="#i-breakpt"/></svg></button>
                <button class="tool" aria-label="끊기"><svg class="icon"><use href="#i-break"/></svg></button>
                <button class="tool" aria-label="결합"><svg class="icon"><use href="#i-join"/></svg></button>
                <button class="tool" aria-label="모따기"><svg class="icon"><use href="#i-chamfer"/></svg></button>
                <button class="tool" aria-label="모깎기"><svg class="icon"><use href="#i-fillet"/></svg></button>
                <button class="tool" aria-label="곡선 혼합"><svg class="icon"><use href="#i-blend"/></svg></button>
                <button class="tool" aria-label="분해"><svg class="icon"><use href="#i-explode"/></svg></button>
            </div>
            <div class="toolbar vertical">
                <span class="grip"></span>
                <button class="tool" aria-label="맨 앞으로"><svg class="icon"><use href="#i-front"/></svg></button>
                <button class="tool" aria-label="맨 뒤로"><svg class="icon"><use href="#i-back"/></svg></button>
                <button class="tool" aria-label="객체 위로"><svg class="icon"><use href="#i-above"/></svg></button>
                <button class="tool" aria-label="객체 아래로"><svg class="icon"><use href="#i-under"/></svg></button>
                <span class="sep"></span>
                <button class="tool" aria-label="문자 앞으로"><svg class="icon"><use href="#i-abc"/></svg></button>
                <button class="tool" aria-label="해치 뒤로"><svg class="icon"><use href="#i-hatchback"/></svg></button>
            </div>
        </div>
    </main>

    <section class="command">
        <div class="command-side">
            <span class="dots"></span>
            <button aria-label="명령행 닫기"><svg viewBox="0 0 11 11" width="11" height="11"><path d="M2 2l7 7M9 2l-7 7" stroke="#fff" stroke-width="2"/></svg></button>
            <button aria-label="설정"><svg class="icon"><use href="#i-wrench"/></svg></button>
        </div>
        <div class="command-main">
            <div class="history">
                <p><span class="ko">명령</span>:</p>
                <p><span class="ko">명령</span>:</p>
                <p><span class="ko">명령</span>: _saveas</p>
                <p><span class="ko">현재</span> <span class="ko">파일</span> <span class="ko">형식</span>: AutoCAD 2007(LT 2007) <span class="ko">도면</span></p>
            </div>
            <div class="prompt">
                <button class="recent" aria-label="최근 명령"><svg class="icon"><use href="#i-saveas"/></svg><span class="caret small"></span></button>
                <label for="command-input"><b>SAVEAS</b> <span class="ko">파일</span> <span class="ko">형식</span> <span class="ko">입력</span> [</label>
                <button class="chip">R14(<i>LT98</i>&amp;LT97)</button>
                <button class="chip">2000(<i>LT2000</i>)</button>
                <button class="chip">2004(<i>LT2004</i>)</button>
                <button class="chip">2007(<i>LT2007</i>)</button>
                <button class="chip">2010(<i>LT2010</i>)</button>
                <button class="chip">2013(<i>LT2013</i>)</button>
                <button class="chip"><span class="ko">표준</span>(<i>S</i>)</button>
                <button class="chip"><i>DXF</i>(DXF)</button>
                <button class="chip"><span class="ko">템플릿</span>(<i>T</i>)</button>
                <span>] &lt;R2007&gt;:</span>
                <input id="command-input" type="text">
            </div>
        </div>
    </section>

    <footer class="status">
        <span class="coords">-288,9752, 3286,8235, 0,0000</span>
        <div class="status-group">
            <button class="tool" aria-label="구속조건 추정"><svg class="icon"><use href="#i-infer"/></svg></button>
            <button class="tool" aria-label="스냅"><svg class="icon"><use href="#i-snap"/></svg></button>
            <button class="tool" aria-label="그리드"><svg class="icon"><use href="#i-grid"/></svg></button>
            <button class="tool" aria-label="직교"><svg class="icon"><use href="#i-ortho"/></svg></button>
            <button class="tool" aria-label="극좌표 추적"><svg class="icon"><use href="#i-polar"/></svg></button>
            <button class="tool on" aria-label="객체 스냅"><svg class="icon"><use href="#i-osnap"/></svg></button>
            <button class="tool" aria-label="3D 객체 스냅"><svg class="icon"><use href="#i-3dosnap"/></svg></button>
            <button class="tool" aria-label="객체 스냅 추적"><svg class="icon"><use href="#i-otrack"/></svg></button>
            <button class="tool" aria-label="동적 UCS"><svg class="icon"><use href="#i-ducs"/></svg></button>
            <button class="tool" aria-label="동적 입력"><svg class="icon"><use href="#i-dyn"/></svg></button>
            <button class="tool" aria-label="선가중치"><svg class="icon"><use href="#i-lwt"/></svg></button>
            <button class="tool" aria-label="투명도"><svg class="icon"><use href="#i-tpy"/></svg></button>
            <button class="tool" aria-label="빠른 특성"><svg class="icon"><use href="#i-qp"/></svg></button>
            <button class="tool" aria-label="선택 순환"><svg class="icon"><use href="#i-sc"/></svg></button>
            <button class="tool" aria-label="주석 감시"><svg class="icon"><use href="#i-am"/></svg></button>
        </div>
        <div class="status-group end">
            <button class="tool wide">모형</button>
            <button class="tool" aria-label="배치"><svg class="icon"><use href="#i-model"/></svg></button>
            <button class="tool" aria-label="뷰 보기"><svg class="icon"><use href="#i-views"/></svg></button>
        </div>
        <div class="status-group">
            <button class="tool scale"><svg class="icon"><use href="#i-scaleman"/></svg>1:1<span class="caret"></span></button>
            <button class="tool" aria-label="주석 가시성"><svg class="icon"><use href="#i-scalelamp"/></svg></button>
            <button class="tool dim" aria-label="축척 자동 추가"><svg class="icon"><use href="#i-scaleman"/></svg></button>
        </div>
        <div class="status-group last">
            <button class="tool" aria-label="작업공간 전환"><svg class="icon"><use href="#i-gear"/></svg></button>
            <button class="tool" aria-label="위치 잠금"><svg class="icon"><use href="#i-lock"/></svg></button>
            <button class="tool" aria-label="하드웨어 가속"><svg class="icon"><use href="#i-hw"/></svg></button>
            <button class="tool lamp" aria-label="객체 분리"><svg class="icon"><use href="#i-lampoff"/></svg></button>
            <button class="drop dark" aria-label="상태 막대 메뉴"></button>
            <button class="tool" aria-label="화면 정리"><svg class="icon"><use href="#i-clean"/></svg></button>
        </div>
    </footer>
</body>
</html>
```
FILE: styles.css
```
* {
    box-sizing: border-box;
}

body {
    margin: 0;
    height: 100vh;
    display: flex;
    flex-direction: column;
    overflow: hidden;
    background: #686868;
    font-family: "Noto Sans", "Noto Sans CJK KR", sans-serif;
    font-size: 12px;
    color: #000;
}

button,
input,
select {
    font: inherit;
    color: inherit;
    margin: 0;
    padding: 0;
    border: 0;
    border-radius: 0;
    background: none;
}

button {
    display: flex;
    align-items: center;
    justify-content: center;
}

/* icons */
.sprite {
    display: none;
}

.icon {
    width: 17px;
    height: 17px;
    flex: none;
    fill: none;
    stroke: #3f4650;
    stroke-width: 1;
}

.lt {
    fill: #f7f8fa;
}

.dk {
    fill: #3f4650;
    stroke: none;
}

.bk {
    stroke: #111;
}

.bf {
    fill: #b4dbf5;
    stroke: #1c6fc0;
}

.bs {
    stroke: #1c6fc0;
}

.ink {
    fill: #222;
    stroke: none;
    font-family: "Liberation Sans", sans-serif;
}

.lab {
    fill: #222;
    stroke: none;
    font-family: "Liberation Sans", sans-serif;
    font-size: 12px;
}

.num {
    fill: #0000d0;
    stroke: none;
    font-family: "Liberation Sans", sans-serif;
    font-size: 10px;
    font-weight: 700;
}

.kr {
    fill: #000;
    stroke: none;
    font-family: "Noto Sans CJK KR", sans-serif;
    font-size: 9px;
}

.tiny {
    fill: #1c6fc0;
    stroke: none;
    font-family: "Liberation Sans", sans-serif;
    font-size: 6px;
    font-weight: 700;
}

.tool {
    width: 23px;
    height: 22px;
    padding: 2px 3px 3px;
    flex: none;
}

.dim .icon {
    opacity: 0.5;
}

.drop {
    width: 12px;
    flex: none;
}

.drop::after,
.caret {
    content: "";
    border: 4px solid transparent;
    border-top: 5px solid #222;
    border-bottom: 0;
}

.drop::after,
.caret.small {
    border-width: 3px;
    border-top-width: 4px;
    border-top-color: #666;
    border-bottom-width: 0;
}

.drop.dark::after {
    border-width: 4px;
    border-top-width: 5px;
    border-top-color: #000;
    border-bottom-width: 0;
}

.drop.right::after {
    border: 4px solid transparent;
    border-left: 5px solid #000;
    border-right: 0;
}

/* title bar and menu */
.top {
    display: grid;
    grid-template-columns: 41px 1fr;
    grid-template-rows: 24px 21px;
    background: #a0a0a0;
}

.app-button {
    grid-row: 1 / 3;
    height: 41px;
    border: 1px solid #111;
    background: linear-gradient(#d8d8d8, #a8a8a8 45%, #787878);
    gap: 2px;
}

.logo {
    width: 24px;
    height: 26px;
}

.app-button .caret {
    border-left-width: 3px;
    border-right-width: 3px;
    border-top-width: 4px;
}

.title-bar {
    display: flex;
    background: #fff;
    border-bottom: 1px solid #333;
}

.quick-access {
    display: flex;
    align-items: center;
    padding-left: 5px;
    background: #a4a4a4;
}

.quick-access .tool {
    width: 24px;
}

.quick-access .drop {
    width: 11px;
}

.quick-access .drop.dark {
    width: 15px;
}

.workspace-pick {
    display: flex;
    align-items: center;
    width: 179px;
    height: 22px;
    margin-left: 2px;
    padding-left: 3px;
    border: 1px solid #777;
    background: linear-gradient(#cacaca, #b2b2b2);
}

.workspace-pick select {
    flex: 1;
    height: 20px;
    padding-left: 1px;
    appearance: none;
    color: #666;
    background: url("data:image/svg+xml,%3Csvg xmlns='http://www.w3.org/2000/svg' width='9' height='5'%3E%3Cpath d='M0 0h9l-4.5 5z' fill='%23444'/%3E%3C/svg%3E") right 1px center no-repeat;
}

.title {
    flex: 1;
    margin: 0;
    font-family: "Noto Sans CJK KR", sans-serif;
    font-size: 12px;
    font-weight: 400;
    line-height: 21px;
    text-align: center;
}

.title span {
    margin-left: 16px;
}

.info-center {
    display: flex;
    align-items: center;
    background: #a4a4a4;
}

.info-center .drop.right {
    width: 15px;
}

.info-center input {
    width: 180px;
    height: 21px;
    padding: 0 4px;
    border: 1px solid #777;
    background: #f0f0f0;
    font-style: italic;
}

.info-center input::placeholder {
    color: #777;
    opacity: 1;
}

.info-center .tool {
    width: 24px;
}

.info-center .help {
    margin-left: 12px;
}

.login {
    gap: 4px;
    width: 120px;
    justify-content: flex-start;
    padding-left: 4px;
    color: #fff;
    font-size: 13px;
}

.login .caret {
    margin: 0 4px 0 auto;
}

.window-buttons {
    display: flex;
    padding: 0 3px 0 25px;
}

.window-buttons button {
    width: 45px;
}

.window-buttons svg {
    width: 11px;
    height: 11px;
    fill: none;
    stroke: #888;
}

.menu {
    display: flex;
    align-items: center;
    gap: 26px;
    padding: 0 0 1px 14px;
    background: linear-gradient(#a0a0a0, #585858);
    font-family: "Noto Sans CJK KR", sans-serif;
}

.menu a {
    color: #fff;
    text-decoration: none;
    line-height: 20px;
}

.mdi {
    display: flex;
    gap: 6px;
    margin-left: auto;
    padding-right: 4px;
}

.mdi svg {
    width: 11px;
    height: 11px;
    fill: none;
    stroke: #222;
}

/* drawing tabs */
.file-tabs {
    display: flex;
    align-items: flex-end;
    height: 27px;
    padding-left: 15px;
    background: linear-gradient(#a2a2a2, #8c8c8c);
    border-bottom: 1px solid #a8a8a8;
}

.file-tab {
    position: relative;
    display: flex;
    align-items: center;
    width: 136px;
    height: 23px;
    padding: 0 19px 0 17px;
}

.file-tab > span,
.tab-close {
    position: relative;
}

.tab-shape {
    position: absolute;
    inset: 0;
    width: 100%;
    height: 100%;
}

.tab-close {
    margin-left: auto;
}

.tab-close svg {
    width: 8px;
    height: 8px;
    stroke: #777;
    stroke-width: 2;
}

.tab-new {
    margin-bottom: 3px;
}

.tab-new svg {
    width: 24px;
    height: 17px;
}

/* toolbars */
.toolbars {
    display: flex;
    flex-direction: column;
    gap: 3px;
    padding: 4px 0;
}

.row {
    display: flex;
    gap: 1px;
}

.toolbar {
    display: flex;
    border: 1px solid #2c2c2c;
    background: #ebebeb;
}

.grip {
    display: flex;
    align-items: center;
    justify-content: center;
    width: 8px;
    background: #585858;
}

.grip::before {
    content: "";
    width: 4px;
    height: 14px;
    background: conic-gradient(#8c8c8c 25%, #1c1c1c 0) 0 0 / 2px 2px;
}

.sep {
    width: 6px;
    padding: 2px 3px 2px 2px;
    background: #8a8a8a content-box;
}

.combo {
    width: 120px;
    height: 22px;
    padding: 0 0 1px 5px;
    appearance: none;
    color: #757575;
    background: #cbcbcb url("data:image/svg+xml,%3Csvg xmlns='http://www.w3.org/2000/svg' width='9' height='6'%3E%3Cpath d='M1 1l3.500 4 3.500-4' fill='none' stroke='%23999'/%3E%3C/svg%3E") right 2px center no-repeat;
}

.combo.indent {
    padding-left: 19px;
}

.combo.workspace {
    width: 174px;
    padding-left: 9px;
}

.combo.plot {
    width: 118px;
    padding-left: 10px;
}

.combo-box {
    display: flex;
    align-items: center;
    background: #cbcbcb;
}

.combo-box .combo {
    flex: 1;
    width: 0;
}

.layer {
    width: 299px;
    padding-left: 2px;
}

.color {
    width: 150px;
    padding-left: 6px;
}

.linetype {
    width: 160px;
    padding-left: 5px;
}

.weight {
    width: 125px;
    padding-left: 5px;
}

.swatch {
    width: 10px;
    height: 10px;
    border: 1px solid #000;
    background: #fff;
}

.stroke {
    width: 60px;
    height: 1px;
    background: #000;
}

.stroke.short {
    width: 35px;
}

.vertical {
    flex-direction: column;
    width: 25px;
}

.vertical .tool {
    width: 22px;
}

.vertical .grip {
    width: auto;
    height: 8px;
}

.vertical .grip::before {
    width: 14px;
    height: 4px;
}

.vertical .sep {
    width: auto;
    height: 6px;
    padding: 2px 2px 3px;
}

/* drawing area */
.workspace-area {
    flex: 1;
    min-height: 0;
    display: flex;
}

.side {
    flex: none;
}

.left {
    width: 29px;
}

.right {
    width: 32px;
    padding-left: 4px;
}

.drawing {
    flex: 1;
    display: grid;
    grid-template-columns: 1fr 18px;
    grid-template-rows: 1fr 16px;
    border: 2px solid #8c8c8c;
    border-right: 1px solid #fff;
    border-bottom: 1px solid #fff;
    background: #f0f0f0;
}

.canvas {
    position: relative;
    background: #000;
}

.entity {
    position: absolute;
    left: 263px;
    top: 161px;
    width: 434px;
    height: 452px;
    border: 1px solid #fff;
}

.vscroll,
.hscroll {
    display: flex;
    align-items: center;
}

.vscroll {
    flex-direction: column;
    padding-right: 1px;
}

.vscroll button {
    width: 17px;
    height: 17px;
}

.vscroll svg,
.hscroll svg {
    fill: none;
    stroke: #555;
    stroke-width: 2;
}

.vscroll svg {
    width: 9px;
    height: 6px;
}

.vscroll .thumb {
    width: 15px;
    height: 16px;
    margin: 412px 0 auto;
    background: #cdcdcd;
}

.layout-bar {
    grid-column: 1 / 3;
    display: flex;
    padding-bottom: 1px;
    font-family: "Noto Sans CJK KR", sans-serif;
    font-size: 13px;
}

.nav {
    width: 14px;
    border-right: 1px solid #aaa;
}

.nav svg {
    width: 9px;
    height: 9px;
    fill: #555;
    stroke: #555;
    stroke-width: 1;
}

.layout {
    position: relative;
    padding: 0 7px 0 8px;
    line-height: 14px;
}

.layout::after {
    content: "";
    position: absolute;
    inset: 0;
    border-right: 1px solid #555;
    border-bottom: 1px solid #999;
    transform: skewX(-25deg);
}

.layout.active {
    margin-left: 1px;
    padding: 0 9px;
    background: #000;
    color: #fff;
    clip-path: polygon(0 0, 100% 0, 86% 100%, 12% 100%);
}

.layout.active::after {
    display: none;
}

.hscroll {
    width: 643px;
    margin-left: auto;
    padding-right: 18px;
}

.splitter {
    width: 6px;
    height: 14px;
    background: #cdcdcd;
}

.hscroll button {
    width: 17px;
    height: 15px;
}

.hscroll svg {
    width: 6px;
    height: 9px;
}

.hscroll .thumb {
    width: 17px;
    height: 14px;
    margin: 0 105px 0 auto;
    background: #cdcdcd;
}

/* command window */
.command {
    display: flex;
    height: 96px;
    margin-top: 5px;
    border-top: 1px solid #7c7c7c;
    border-bottom: 1px solid #777;
    font-family: "Liberation Mono", "Noto Sans CJK KR", monospace;
}

.command-side {
    display: flex;
    flex-direction: column;
    align-items: center;
    gap: 6px;
    width: 23px;
    padding-top: 4px;
    background: linear-gradient(#8c8c8c, #666 45%, #2e2e2e);
}

.dots {
    width: 17px;
    height: 5px;
    background: conic-gradient(#666 25%, #b8b8b8 0 50%, #666 0) 0 0 / 3px 3px;
}

.command-main {
    flex: 1;
    display: flex;
    flex-direction: column;
}

.history {
    flex: 1;
    min-height: 0;
    padding: 10px 3px 0;
    background: #c8c8c8;
    border-bottom: 1px solid #777;
}

.history p {
    margin: 0;
    line-height: 15px;
}

/* hangul sits in the latin line box without growing it */
.ko {
    font-family: "Noto Sans CJK KR", sans-serif;
    font-size: 13px;
    line-height: 0;
}

.prompt {
    display: flex;
    flex: none;
    align-items: center;
    gap: 2px;
    height: 22px;
    padding-left: 4px;
    background: #fff;
    white-space: pre;
}

.prompt label,
.prompt > span,
.chip {
    line-height: 18px;
}

.recent {
    gap: 2px;
    margin-right: 4px;
}

.chip {
    display: block;
    height: 18px;
    padding: 0 1px;
    border-radius: 3px;
    background: #d0d0d0;
}

.chip i {
    font-style: normal;
    color: #0000f0;
}

.prompt input {
    flex: 1;
    outline: 0;
}

/* status bar */
.status {
    display: flex;
    height: 23px;
    border-top: 1px solid #000;
    border-bottom: 2px solid #2c2c2c;
    background: linear-gradient(#969696, #747474);
}

.coords {
    width: 203px;
    padding-left: 12px;
    font-family: "Liberation Sans", sans-serif;
    line-height: 20px;
}

.status-group {
    display: flex;
}

.status .tool {
    width: 22px;
    height: 20px;
    padding: 0;
    border-right: 1px solid #6a6a6a;
    background: linear-gradient(#b4b4b4, #a0a0a0);
}

.status .on {
    background: #aed8e6;
}

.status .wide {
    width: 29px;
}

.status-group.end {
    margin-left: auto;
    margin-right: 15px;
}

.status .scale {
    width: 51px;
    gap: 2px;
}

.last {
    margin-left: 7px;
}

.status .lamp {
    width: 32px;
    background: #8e8e8e;
}
```
